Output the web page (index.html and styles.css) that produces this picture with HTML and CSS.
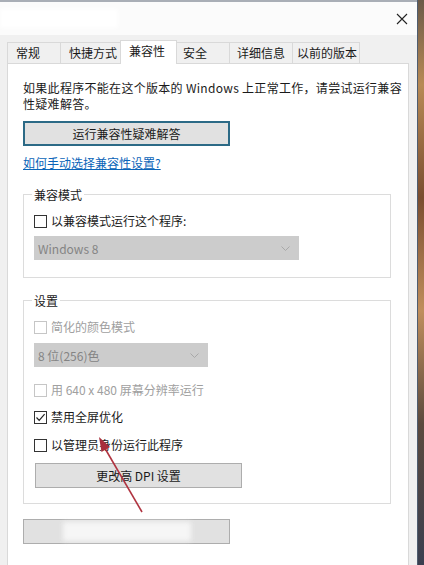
FILE: index.html
```html
<!DOCTYPE html>
<html lang="zh-CN">
<head>
<meta charset="utf-8">
<title>属性</title>
<link rel="stylesheet" href="styles.css">
</head>
<body>
<div class="desk">
  <div class="win">
    <div class="titlebar">
      <div class="blur-title"></div>
      <svg class="close" width="12" height="12" viewBox="0 0 12 12"><path d="M1 1L11 11M11 1L1 11" stroke="#222" stroke-width="1.1" fill="none"/></svg>
    </div>
    <div class="tabs">
      <div class="tab t1">常规</div>
      <div class="tab t2">快捷方式</div>
      <div class="tab t3 active">兼容性</div>
      <div class="tab t4">安全</div>
      <div class="tab t5">详细信息</div>
      <div class="tab t6">以前的版本</div>
    </div>
    <div class="panel">
      <p class="intro">如果此程序不能在这个版本的 Windows 上正常工作，请尝试运行兼容<br>性疑难解答。</p>
      <div class="btn btn-focus">运行兼容性疑难解答</div>
      <a class="link">如何手动选择兼容性设置?</a>

      <div class="group g1">
        <div class="gtitle">兼容模式</div>
        <div class="check c-first"><span class="box"></span><span>以兼容模式运行这个程序:</span></div>
        <div class="select sel1"><span>Windows 8</span><svg width="9" height="5" viewBox="0 0 9 5"><path d="M0.5 0.5L4.5 4.5L8.5 0.5" stroke="#a8a8a8" fill="none"/></svg></div>
      </div>

      <div class="group g2">
        <div class="gtitle">设置</div>
        <div class="check disabled c-a"><span class="box"></span><span>简化的颜色模式</span></div>
        <div class="select sel2"><span>8 位(256)色</span><svg width="9" height="5" viewBox="0 0 9 5"><path d="M0.5 0.5L4.5 4.5L8.5 0.5" stroke="#a8a8a8" fill="none"/></svg></div>
        <div class="check disabled c-b"><span class="box"></span><span>用 640 x 480 屏幕分辨率运行</span></div>
        <div class="check c-c"><span class="box"><svg width="11" height="11" viewBox="0 0 11 11"><path d="M1.5 5.5L4.2 8.3L9.6 2.2" stroke="#222" stroke-width="1.2" fill="none"/></svg></span><span>禁用全屏优化</span></div>
        <div class="check c-d"><span class="box"></span><span>以管理员身份运行此程序</span></div>
        <div class="btn btn-dpi">更改高 DPI 设置</div>
      </div>

      <div class="btn btn-blur"><div class="blurred"></div></div>
    </div>
    <svg class="arrow" width="424" height="565" viewBox="0 0 424 565">
      <line x1="142" y1="512" x2="103" y2="445" stroke="#b03440" stroke-width="1.6"/>
      <path d="M99 437L110 447L101.5 452Z" fill="#a82f3c"/>
    </svg>
  </div>
  <div class="edge"></div>
</div>
</body>
</html>
```
FILE: styles.css
```css
* { box-sizing: border-box; }
html, body { margin: 0; padding: 0; }
body {
  width: 424px;
  height: 565px;
  overflow: hidden;
  font-family: "Noto Sans CJK SC", "Noto Sans", sans-serif;
  font-size: 12px;
  color: #1a1a1a;
}
.desk { display: flex; width: 424px; height: 565px; }
.win {
  width: 418px;
  height: 565px;
  background: #f0f0f0;
  border-right: 1px solid #4f5d70;
  display: flex;
  flex-direction: column;
  position: relative;
}
.edge {
  width: 6px;
  background: linear-gradient(180deg, #6b5a48 0%, #b88a55 15%, #7a4e30 35%, #c08e5c 55%, #5b4a3e 75%, #3a3f50 100%);
}
.titlebar {
  height: 35px;
  background: #fbfbfb;
  border-top: 2px solid #a9aeb6;
  display: flex;
  align-items: center;
  justify-content: space-between;
  padding-right: 9px;
}
.blur-title {
  width: 118px;
  height: 19px;
  background: #ffffff;
  filter: blur(2px);
}
.close { margin-top: 0; }
.tabs {
  height: 28px;
  display: flex;
  align-items: flex-end;
  padding-left: 7px;
}
.tab {
  height: 21px;
  line-height: 20px;
  border: 1px solid #d9d9d9;
  border-bottom: none;
  background: #f0f0f0;
  padding-left: 7px;
  margin-right: -1px;
  white-space: nowrap;
}
.t1 { width: 54px; padding-left: 8px; }
.t2 { width: 61px; padding-left: 8px; }
.t3 { width: 57px; padding-left: 8px; }
.t4 { width: 54px; padding-left: 6px; }
.t5 { width: 64px; padding-left: 7px; }
.t6 { width: 68px; padding-left: 4px; }
.tab.active {
  height: 24px;
  line-height: 20px;
  background: #fff;
  margin-bottom: -1px;
  position: relative;
  z-index: 1;
}
.panel {
  flex: 1;
  margin-left: 7px;
  width: 402px;
  background: #fff;
  border: 1px solid #d9d9d9;
  border-bottom: none;
  padding: 16px 0 0 15px;
}
.intro {
  margin: 0;
  line-height: 16px;
  white-space: nowrap;
  letter-spacing: 0.3px;
}
.btn {
  height: 25px;
  background: #e1e1e1;
  border: 1px solid #adadad;
  display: flex;
  align-items: center;
  justify-content: center;
  white-space: nowrap;
}
.btn-focus {
  width: 207px;
  margin-top: 9px;
  border: 2px solid #2c6a86;
}
.link {
  display: inline-block;
  margin-top: 9px;
  line-height: 16px;
  color: #0a64b8;
  text-decoration: underline;
}
.group {
  width: 368px;
  border: 1px solid #dcdcdc;
  padding-left: 10px;
}
.g1 { margin-top: 23px; padding-bottom: 17px; }
.g2 { margin-top: 22px; padding-bottom: 15px; }
.gtitle {
  margin-top: -8px;
  line-height: 16px;
  background: #fff;
  width: fit-content;
  padding: 0 2px;
  margin-left: -2px;
}
.check {
  display: flex;
  align-items: center;
  gap: 4px;
  line-height: 16px;
  height: 16px;
}
.box {
  width: 13px;
  height: 13px;
  border: 1px solid #333;
  background: #fff;
  display: flex;
  align-items: center;
  justify-content: center;
}
.check.disabled { color: #a0a0a0; }
.check.disabled .box { border-color: #c6c6c6; }
.c-first { margin-top: 10px; }
.c-a { margin-top: 10px; }
.c-b { margin-top: 15px; }
.c-c { margin-top: 11px; }
.c-d { margin-top: 12px; }
.select {
  height: 24px;
  background: #cccccc;
  color: #848484;
  display: flex;
  align-items: center;
  justify-content: space-between;
  padding: 0 9px 0 4px;
}
.sel1 { width: 265px; margin-top: 7px; }
.sel2 { width: 174px; margin-top: 8px; }
.btn-dpi { width: 207px; margin-top: 10px; margin-left: 1px; }
.btn-blur {
  width: 207px;
  margin-top: 15px;
  justify-content: flex-start;
  padding-left: 39px;
}
.blurred {
  width: 128px;
  height: 19px;
  background: #f6f6f6;
  filter: blur(2.5px);
}
.arrow {
  position: absolute;
  left: 0;
  top: 0;
  pointer-events: none;
  z-index: 5;
}
```
